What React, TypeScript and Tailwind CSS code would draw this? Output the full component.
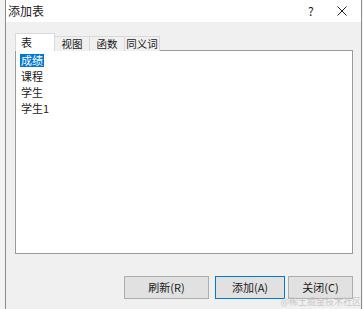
export default function App() {
  const items = ["成绩", "课程", "学生", "学生1"]
  const tabs = ["视图", "函数", "同义词"]

  return (
    <div
      className="relative flex h-[309px] w-[363px] overflow-hidden bg-[#f3f3f3] pl-[5px] pr-[1px] text-[11px] text-[#1a1a1a]"
      style={{ fontFamily: '"Noto Sans CJK SC", "Noto Sans", sans-serif' }}
    >
      <div className="flex flex-1 flex-col border-x border-[#8c8c8c] bg-[#f0f0f0]">
        {/* title bar */}
        <div className="flex h-[22px] items-center bg-white pl-[2px] text-[12px]">
          <span className="flex-1">添加表</span>
          <span className="w-[10px] text-[12px]">?</span>
          <span className="ml-[19px] mr-[14px]">
            <svg width="10" height="10" viewBox="0 0 10 10">
              <path d="M0.5 0.5 L9.5 9.5 M9.5 0.5 L0.5 9.5" stroke="#222" strokeWidth="1" />
            </svg>
          </span>
        </div>

        {/* body */}
        <div className="flex flex-1 flex-col pl-[9px] pr-[8px] pt-[11px]">
          <div className="relative z-10 -mb-px flex h-[18px] items-end">
            <div className="flex h-[18px] w-[40px] items-center border-x border-t border-[#d9d9d9] bg-white pl-[5px]">
              表
            </div>
            {tabs.map((t) => (
              <div
                key={t}
                className="flex h-[15px] w-[35px] items-center justify-center whitespace-nowrap border-r border-t border-[#d9d9d9] bg-[#f0f0f0] text-[10.5px]"
              >
                {t}
              </div>
            ))}
          </div>

          <div className="h-[204px] border border-[#9a9a9a] bg-white pl-[4px] pt-px">
            {items.map((item, i) => (
              <div key={item} className="flex h-[16px] items-center">
                <span
                  className={
                    i === 0
                      ? "flex h-[13px] items-center bg-[#0078d7] px-px text-white"
                      : "flex h-[13px] items-center px-px"
                  }
                >
                  {item}
                </span>
              </div>
            ))}
          </div>

          <div className="mt-[22px] flex justify-end gap-[6px]">
            <button className="h-[23px] w-[85px] border border-[#adadad] bg-[#e1e1e1]">刷新(R)</button>
            <button className="h-[23px] w-[70px] border border-[#0078d7] bg-[#e1e1e1]">添加(A)</button>
            <button className="ml-[-3px] h-[23px] w-[65px] border border-[#adadad] bg-[#e1e1e1]">关闭(C)</button>
          </div>
        </div>
      </div>

      <span className="absolute bottom-[1px] right-[2px] text-[9px] text-[#c8c8c8]">@稀土掘金技术社区</span>
    </div>
  )
}
